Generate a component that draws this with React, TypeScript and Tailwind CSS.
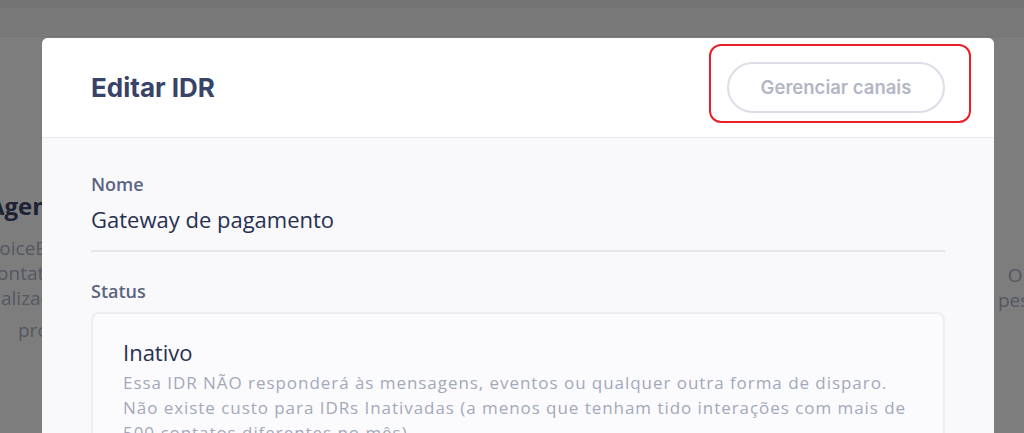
import React from 'react';

const sans = { fontFamily: '"Open Sans", "Noto Sans", sans-serif' };
const heading = { fontFamily: 'Inter, "Noto Sans", sans-serif' };

export default function App() {
  return (
    <div className="relative h-[433px] w-[1024px] overflow-hidden bg-[#fafafb]" style={sans}>
      {/* page behind the modal */}
      <div className="h-[37px] border-b border-[#e9e9ee] bg-[#f2f2f4] shadow-[inset_0_8px_0_#e6e6e9]" />
      <div className="flex justify-between pt-[152px]">
        <div className="-ml-[12px] w-[54px]">
          <h2 className="whitespace-nowrap text-[24px] font-bold leading-[34px] text-[#3a4669]">Agentes</h2>
          <div className="mt-[13px] whitespace-nowrap text-[19px] leading-[25px] text-[#a9b0c4]">
            <div>VoiceBot</div>
            <div>contatos</div>
            <div className="-ml-[16px]">atualizações</div>
          </div>
          <p className="mt-[7px] whitespace-nowrap pl-[30px] text-[19px] leading-[25px] text-[#a9b0c4]">processos</p>
        </div>
        <div className="-mr-[40px] mt-[74px] w-[66px]">
          <p className="text-[19px] leading-[25px] text-[#a9b0c4]">
            &nbsp;&nbsp;O pessoal
          </p>
        </div>
      </div>

      {/* overlay */}
      <div className="absolute inset-0 bg-black/50" />

      {/* modal */}
      <div className="absolute left-[42px] top-[38px] w-[952px] overflow-hidden rounded-t-[6px] bg-[#f9f9fc]">
        <div className="flex h-[100px] items-center justify-between border-b border-[#e8e8ee] bg-white px-[49px]">
          <h1 className="text-[26px] font-bold text-[#38436a]" style={heading}>
            Editar IDR
          </h1>
          <div className="relative">
            <button
              className="flex h-[51px] w-[218px] items-center justify-center rounded-full border-2 border-[#dcdde6] bg-white text-[18.5px] font-semibold text-[#b3b6c6]"
              style={heading}
            >
              Gerenciar canais
            </button>
            <div className="pointer-events-none absolute -bottom-[10px] -left-[18px] -right-[26px] -top-[18px] rounded-[12px] border-2 border-[#e8202a]" />
          </div>
        </div>

        <div className="px-[49px] pt-[34px]">
          <div className="text-[18px] font-semibold leading-[24px] text-[#5b6482]">Nome</div>
          <div className="mt-[8px] border-b-2 border-[#e6e7ec] pb-[16px] text-[22px] leading-[30px] text-[#27304f]">
            Gateway de pagamento
          </div>

          <div className="mt-[27px] text-[18px] font-semibold leading-[24px] text-[#5b6482]">Status</div>
          <div className="mt-[9px] rounded-[8px] border-2 border-[#eeeef2] bg-[#fbfbfd] px-[30px] pt-[23px]">
            <div className="text-[22px] leading-[30px] text-[#27304f]">Inativo</div>
            <p className="mt-[3px] text-[17px] leading-[25px] tracking-[0.95px] text-[#a3a8bb]">
              Essa IDR NÃO responderá às mensagens, eventos ou qualquer outra forma de disparo.
              <br />
              Não existe custo para IDRs Inativadas (a menos que tenham tido interações com mais de
              500 contatos diferentes no mês).
            </p>
          </div>
        </div>
      </div>
    </div>
  );
}
